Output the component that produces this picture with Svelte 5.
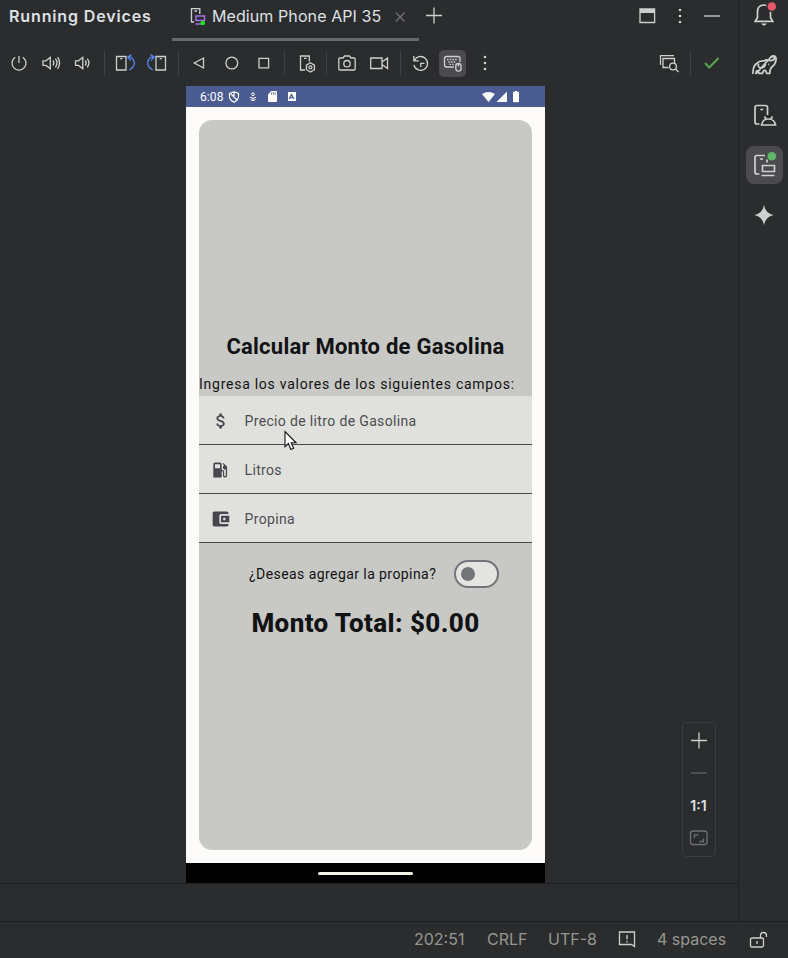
<script>
  const fields = [
    { label: 'Precio de litro de Gasolina', icon: 'dollar' },
    { label: 'Litros', icon: 'fuel' },
    { label: 'Propina', icon: 'wallet' }
  ];
  const tools = [
    'power', 'volup', 'voldown', '|', 'rotl', 'rotr', '|', 'back', 'home', 'overview', '|',
    'settings', '|', 'camera', 'video', '|', 'history', 'keyboard', 'more'
  ];
  let tip = $state(false);
</script>

{#snippet glyph(name)}
  <svg class="glyph" viewBox="0 0 24 24" width="24" height="24">
    {#if name === 'power'}
      <path d="M12 5v7M8.2 6.2a7 7 0 1 0 7.6 0" />
    {:else if name === 'volup'}
      <path d="M4 9.800h3l4.300-3.500v11.400L7 14.400H4zM14 9.500q1.800 2.500 0 5M16.400 7.700q3.300 4.300 0 8.600M18.600 6.200q4 5.800 0 11.600" />
    {:else if name === 'voldown'}
      <path d="M4.500 9.800h3l4.300-3.500v11.400l-4.300-3.300h-3zM14.300 9.500q1.800 2.500 0 5M16.300 7.700q3.300 4.300 0 8.600" />
    {:else if name === 'rotl'}
      <path d="M3.500 5.500h9.500v13.500h-9.500zM7.200 7.600h2.200" />
      <path class="blue" d="M15 6.200h3q3.300 2 3.300 6t-5 6.800M18.500 3.500l-3.700 2.700 3.200 3.300" />
    {:else if name === 'rotr'}
      <path d="M11 5.500h9.500v13.500H11zM14.700 7.600h2.200" />
      <path class="blue" d="M9 6.200H6q-3.300 2-3.300 6t5 6.800M5.500 3.500l3.700 2.700-3.200 3.300" />
    {:else if name === 'back'}
      <path d="M16.500 7v10L7.300 12z" />
    {:else if name === 'home'}
      <circle cx="12.800" cy="12" r="5.900" />
    {:else if name === 'overview'}
      <path d="M8 7.300h9.600v9.600H8z" />
    {:else if name === 'settings'}
      <path d="M12 19H7.500V5h8.800v5.500M11 7.400h2.600" />
      <path d="M17.400 11.800l4 2.300v4.600l-4 2.300-4-2.300v-4.600z" /><circle cx="17.400" cy="16.400" r="1.500" />
    {:else if name === 'camera'}
      <path d="M4.800 7h3.200l1.500-2h5l1.500 2h3.200q1 0 1 1v10q0 1-1 1H4.800q-1 0-1-1V8q0-1 1-1z" /><circle cx="12" cy="12.700" r="3.200" />
    {:else if name === 'video'}
      <path d="M3.700 7h11.300v10.500H3.700zM15 11l5.500-4v10.500L15 13.500" />
    {:else if name === 'history'}
      <path d="M4.800 5v4.800h5M5.500 9.300a6.900 6.900 0 1 1-.6 4.500M11.800 16v-3.700h3.700" />
    {:else if name === 'keyboard'}
      <path d="M13 16H5.500q-2 0-2-2V7.500q0-2 2-2h11.500q2 0 2 2V11" />
      <path stroke-dasharray="1.500 1.200" d="M6 8.500h11M7.300 11h8M8.500 13.400h5" />
      <rect x="14.800" y="12.500" width="5.200" height="7.700" rx="2.600" /><path d="M17.400 13v2.500" />
    {:else if name === 'more'}
      <g class="fill"><circle cx="12" cy="6" r="1.300" /><circle cx="12" cy="12" r="1.300" /><circle cx="12" cy="18" r="1.300" /></g>
    {:else if name === 'inspect'}
      <path d="M3.500 14V4.700H17M11.500 16.500H6V7.500H17.500V12" /><circle cx="16" cy="15.500" r="3.400" /><path d="M18.500 18l3 3" />
    {:else if name === 'check'}
      <path class="green" d="M6 12l4.200 4.500L19.500 7" />
    {:else if name === 'window'}
      <path d="M4 5h14.600v13.500H4z" /><path class="fill" d="M4 5h14.600v4H4z" />
    {:else if name === 'minus'}
      <path d="M4 12h16" />
    {:else if name === 'plus'}
      <path d="M4 11.500h16M12 3.500v16" />
    {:else if name === 'close'}
      <path class="dim" d="M7.800 8.500l8.700 9M16.500 8.500l-8.700 9" />
    {:else if name === 'lock'}
      <path d="M6 11h10q1.500 0 1.500 1.500v6q0 1.500-1.500 1.500H6q-1.500 0-1.500-1.500v-6Q4.500 11 6 11zM14.500 11V8.500q0-3 3-3t3 3V10M11 14v3" />
    {:else if name === 'note'}
      <path d="M4.500 5h15v14.500L16.500 17.500h-12zM12 8v4.500M12 14v1.600" />
    {:else if name === 'fit'}
      <g class="dim"><rect x="3.500" y="5" width="16.500" height="13.500" rx="2.500" /><path d="M7.500 12V8.800h4M12.500 15.500h4V12.500" /></g>
    {/if}
  </svg>
{/snippet}

<div class="ide">
  <div class="upper">
    <main>
      <header>
        <strong>Running Devices</strong>
        <div class="tab">
          <svg width="18" height="20" viewBox="0 0 18 20" fill="none" stroke="#ced0d6" stroke-width="1.300">
            <path d="M5 16H2.500V2.600h8.300V8M5.500 5h2.600" />
            <path stroke="#a571e6" stroke-width="1.500" d="M7 10h8.500v4.500H7zM6.500 18h6.500" />
            <circle cx="13.800" cy="17" r="2.300" fill="#0bef0b" stroke="none" />
          </svg>
          <span>Medium Phone API 35</span>
          {@render glyph('close')}
        </div>
        <div class="add">{@render glyph('plus')}</div>
        <div class="window-actions">
          {@render glyph('window')}{@render glyph('more')}{@render glyph('minus')}
        </div>
      </header>

      <div class="toolbar">
        {#each tools as name}
          {#if name === '|'}
            <i class="sep"></i>
          {:else}
            <button class:active={name === 'keyboard'} aria-label={name}>{@render glyph(name)}</button>
          {/if}
        {/each}
        <div class="right">
          <button aria-label="inspect">{@render glyph('inspect')}</button><i class="sep"></i><button aria-label="check">{@render glyph('check')}</button>
        </div>
      </div>

      <div class="stage">
        <div class="phone">
          <div class="status">
            <span>6:08</span>
            <svg class="s1" width="12" height="12" viewBox="0 0 12 12" fill="none" stroke="#fff" stroke-width="1.200"><path d="M6 .8l4.500 1.700v3Q10.500 9 6 11.200 1.500 9 1.500 5.500v-3zM3 3l6 6M6 1v4" /></svg>
            <svg class="s2" width="8" height="10" viewBox="0 0 8 10" fill="none" stroke="#fff"><circle cx="4" cy="2.300" r="1.400" /><path d="M1 5.300q3 2 6 0M1.500 7.500q2.500 2.500 5 0M4 6v3" /></svg>
            <svg class="s3" width="9" height="11" viewBox="0 0 10 11" preserveAspectRatio="none"><path fill="#fff" d="M3.500 0H9q1 0 1 1v9q0 1-1 1H1q-1 0-1-1V3.500z" /><path stroke="#4a5c92" d="M4 1.500v2M6 1.500v2M8 1.500v2" /></svg>
            <span class="abox">A</span>
            <svg class="s5" width="38" height="12" viewBox="0 0 38 12" fill="#fff"><path d="M0 3Q6.500-1 13 3L6.500 11zM25 .5V11H14.500zM31 1.500q0-.8.800-.8h1V0h2.400v.700h1q.8 0 .8.800v9q0 .800-.8.800h-4.400q-.8 0-.8-.800z" /></svg>
          </div>
          <div class="screen">
            <section class="card">
              <h1>Calcular Monto de Gasolina</h1>
              <p>Ingresa los valores de los siguientes campos:</p>
              {#each fields as field}
                <div class="field">
                  <svg width="20" height="20" viewBox="0 0 24 24" fill="#45464f">
                    {#if field.icon === 'dollar'}
                      <path d="M11.800 10.900c-2.270-.59-3-1.200-3-2.150 0-1.090 1.010-1.850 2.700-1.850 1.780 0 2.440.85 2.500 2.100h2.210c-.07-1.720-1.120-3.300-3.210-3.810V3h-3v2.160c-1.940.42-3.500 1.680-3.500 3.610 0 2.310 1.910 3.460 4.700 4.130 2.500.6 3 1.480 3 2.410 0 .69-.49 1.790-2.700 1.790-2.060 0-2.870-.92-2.980-2.100h-2.200c.12 2.190 1.760 3.420 3.680 3.830V21h3v-2.150c1.950-.37 3.500-1.500 3.500-3.550 0-2.840-2.430-3.810-4.700-4.400z" />
                    {:else if field.icon === 'fuel'}
                      <path transform="translate(-1.200 0)" d="M19.770 7.230l.01-.01-3.720-3.720L15 4.560l2.110 2.110c-.94.36-1.610 1.260-1.610 2.330 0 1.380 1.120 2.500 2.500 2.500.36 0 .69-.08 1-.21v7.210c0 .55-.45 1-1 1s-1-.45-1-1V14c0-1.100-.9-2-2-2h-1V5c0-1.100-.9-2-2-2H6c-1.100 0-2 .9-2 2v16h10v-7.500h1.500v5c0 1.380 1.120 2.500 2.500 2.500s2.500-1.120 2.500-2.500V9c0-.69-.28-1.320-.73-1.770zM12 10H6V5h6v5z" />
                    {:else}
                      <path d="M21 18v1c0 1.100-.9 2-2 2H4c-1.110 0-2-.9-2-2V5c0-1.100.89-2 2-2h15c1.100 0 2 .9 2 2v1h-9c-1.110 0-2 .9-2 2v8c0 1.100.89 2 2 2h9zm-9-2h10V8H12v8zm4-2.500c-.83 0-1.500-.67-1.500-1.500s.67-1.500 1.500-1.500 1.500.67 1.500 1.500-.67 1.500-1.500 1.500z" />
                    {/if}
                  </svg>
                  <span>{field.label}</span>
                </div>
              {/each}
              <div class="tip">
                <span>¿Deseas agregar la propina?</span>
                <button class="switch" class:on={tip} aria-label="propina" onclick={() => (tip = !tip)}><i></i></button>
              </div>
              <h2>Monto Total: $0.00</h2>
            </section>
          </div>
          <div class="nav"><i></i></div>
          <svg class="cursor" width="14" height="22" viewBox="0 0 14 22"><path fill="#fff" stroke="#111" stroke-width="1.100" d="M1 1.500v15.200l3.400-3.200 2.500 6 2.700-1.200-2.400-5.500h4.900z" /></svg>
        </div>
        <div class="zoom">
          {@render glyph('plus')}
          <div class="faint">{@render glyph('minus')}</div>
          <b>1:1</b>
          {@render glyph('fit')}
        </div>
      </div>
    </main>

    <aside>
      <div><svg viewBox="0 0 38 38"><path d="M10.300 25.300l2.200-3.800V16q0-7 6.500-7t6.500 7v5.500l2.200 3.800z" /><path class="fill" d="M16.200 27.500h5.600q-1 2-2.800 2t-2.800-2z" /><circle cx="26.800" cy="10.500" r="5" fill="#e55765" stroke="#2b2d30" stroke-width="1.500" /></svg></div>
      <div><svg viewBox="0 0 38 38"><path d="M8 28q-.5-7 3.500-10.500 3-3 7.500-2.500 2.500-2 5-.5 5 .5 5.500-2.500 0-1.800-1.800-1.500l-2 1M25.500 11.500q1-2 3.500-1.700 2.500.7 2 4.500-.8 4.500-4.500 7-1.500 1.500-1.800 6h-3l-1-2.500q-1.200-.8-2.200 0l-1 2.500h-3.500l-.8-2.300q-1-.5-1.700 0L10.800 28zM13.500 17.500q-1 4.500 3 4.500 3.500-.5 4-4M23.300 18.300h.9" /></svg></div>
      <div><svg viewBox="0 0 38 38"><path d="M14.500 28H12q-2 0-2-2V11.500q0-2 2-2h8.500q2 0 2 2V19M15.300 13.500h3M16.500 29q1-6 7-6t7 6zM19.500 20.500l1.500 2.500M27.500 20.500L26 23" /></svg></div>
      <div class="active"><svg viewBox="0 0 38 38"><path d="M14.500 28H12q-2 0-2-2V11.500q0-2 2-2h8M15 13h3M22 13.500v3M17.500 19.500h12V25.500h-12zM16.500 29.500h13" /><circle cx="26.800" cy="10.200" r="4.300" fill="#5fb865" stroke="none" /></svg></div>
      <div><svg viewBox="0 0 38 38"><path class="fill" d="M19 9q1.500 8.500 9.700 10-8.200 1.500-9.700 10-1.500-8.500-9.700-10 8.200-1.500 9.700-10z" /></svg></div>
    </aside>
  </div>
  <footer>
    <span class="pos">202:51</span><span class="eol">CRLF</span><span class="enc">UTF-8</span>
    {@render glyph('note')}
    <span class="ind">4 spaces</span>
    {@render glyph('lock')}
  </footer>
</div>

<style>
  :global(body) { margin: 0; background: #2b2c2e; }
  .ide { width: 788px; height: 958px; display: flex; flex-direction: column; background: #2b2c2e; color: #dfe1e5; font-family: Inter, sans-serif; overflow: hidden; }
  .upper { display: flex; height: 922px; box-sizing: border-box; border-bottom: 1px solid #1e1f22; }
  main { width: 739px; display: flex; flex-direction: column; border-right: 1px solid #222325; box-sizing: border-box; }
  svg { display: block; flex: none; }
  .glyph, aside svg { fill: none; stroke: #ced0d0; stroke-width: 1.300; }
  .glyph .blue { stroke: #548af7; }
  .glyph .green { stroke: #57a64a; stroke-width: 2; }
  .glyph .dim { stroke: #6f7175; }
  .glyph .fill, aside .fill { fill: #ced0d0; stroke: none; }
  button { border: 0; padding: 0; background: none; display: flex; align-items: center; justify-content: center; }

  header { height: 42px; display: flex; box-sizing: border-box; }
  strong { box-sizing: border-box; width: 172px; padding-left: 9px; font-size: 16px; font-weight: 600; letter-spacing: .870px; line-height: 33px; white-space: nowrap; }
  .tab { width: 247px; height: 41px; box-sizing: border-box; border-bottom: 3px solid #686a6f; border-radius: 1px; display: flex; align-items: flex-start; padding: 6px 0 0 17px; }
  .tab span { margin-left: 5px; width: 176px; font-size: 16px; line-height: 21px; letter-spacing: .090px; white-space: nowrap; }
  .tab .glyph { margin-top: -2px; }
  .add { padding: 4px 0 0 3px; }
  .window-actions { margin-left: auto; display: flex; gap: 8px; padding: 4px 14px 0 0; }

  .toolbar { height: 44px; box-sizing: border-box; display: flex; align-items: center; padding: 0 0 2px 3px; }
  .toolbar button { width: 32px; height: 27px; }
  .toolbar button.active { width: 27px; margin: 0 3px 0 2px; background: #4b4b4f; border-radius: 5px; }
  .sep { width: 1px; height: 24px; margin: 0 4.500px; background: #3e4043; flex: none; }
  .right { margin-left: auto; display: flex; align-items: center; padding-right: 11px; }

  .stage { height: 797px; display: flex; border-bottom: 1px solid #1e1f22; }
  .phone { position: relative; margin-left: 186px; width: 359px; height: 797px; display: flex; flex-direction: column; font-family: Roboto, sans-serif; color: #111214; }
  .status { height: 21px; background: #4a5c92; display: flex; align-items: center; color: #fff; font-size: 12px; padding-left: 14px; box-sizing: border-box; flex: none; letter-spacing: .1px; }
  .s1 { margin-left: 4px; }
  .s2 { margin-left: 9px; }
  .s3 { margin-left: 11px; }
  .abox { margin-left: 11px; width: 8px; height: 9px; background: #fff; color: #4a5c92; font-size: 8px; line-height: 9px; font-weight: 800; text-align: center; }
  .s5 { margin: 0 25px 0 auto; }
  .screen { flex: 1; background: #fefcfb; padding: 13px; display: flex; }
  .card { flex: 1; border-radius: 13px; background: #c8c8c4; padding-top: 211px; height: 730px; box-sizing: border-box; }
  h1 { margin: 0; font-size: 22px; line-height: 31px; font-weight: 700; text-align: center; white-space: nowrap; letter-spacing: .240px; }
  p { margin: 11px 0 0; font-size: 14px; line-height: 23px; letter-spacing: .745px; white-space: nowrap; }
  .field { height: 49px; box-sizing: border-box; border-bottom: 1px solid #45464f; background: #e0e1dc; display: flex; align-items: center; padding: 2px 0 0 11px; color: #4c4d52; font-size: 14px; letter-spacing: .350px; }
  .field svg { margin-left: .500px; }
  .field span { margin-left: 14px; }
  .tip { height: 61px; display: flex; align-items: center; padding-left: 50px; font-size: 14px; letter-spacing: .430px; white-space: nowrap; }
  .tip span { width: 205px; }
  .switch { width: 45px; height: 28px; box-sizing: border-box; border: 2px solid #74757b; border-radius: 14px; background: #e4e4e1; justify-content: flex-start; padding-left: 5px; }
  .switch i { width: 14px; height: 14px; border-radius: 50%; background: #74757b; }
  .switch.on i { margin-left: 16px; }
  h2 { margin: 3px 0 0; font-size: 26px; line-height: 32px; font-weight: 800; letter-spacing: .400px; text-align: center; white-space: nowrap; }
  .nav { height: 20px; background: #000; display: flex; align-items: center; justify-content: center; flex: none; }
  .nav i { width: 95px; height: 3px; border-radius: 2px; background: #f4f4e6; }
  .cursor { position: absolute; left: 98px; top: 344px; }
  .zoom { margin: 636px 0 0 137px; width: 34px; height: 135px; box-sizing: border-box; border: 1px solid #3c3d3f; border-radius: 5px; display: flex; flex-direction: column; align-items: center; padding: 6px 1px 0 0; }
  .faint { margin-top: 8px; opacity: .35; }
  .zoom b { font-size: 14px; font-weight: 600; line-height: 20px; margin: 11px 0 10px; }

  aside { width: 49px; display: flex; flex-direction: column; align-items: center; padding-left: 1px; box-sizing: border-box; gap: 12px; margin-top: -4px; }
  aside div { width: 37px; height: 38px; border-radius: 8px; display: flex; justify-content: center; }
  aside .active { background: #4b4b4f; }
  aside svg { width: 38px; height: 38px; stroke-width: 1.700; }

  footer { height: 36px; box-sizing: border-box; padding: 0 0 3px 414px; display: flex; align-items: center; color: #969890; font-size: 16px; white-space: nowrap; }
  footer span { width: 73px; flex: none; }
  footer .eol { width: 61px; }
  footer .enc { width: 67px; }
  footer .ind { width: 89px; margin-left: 18px; }
</style>
